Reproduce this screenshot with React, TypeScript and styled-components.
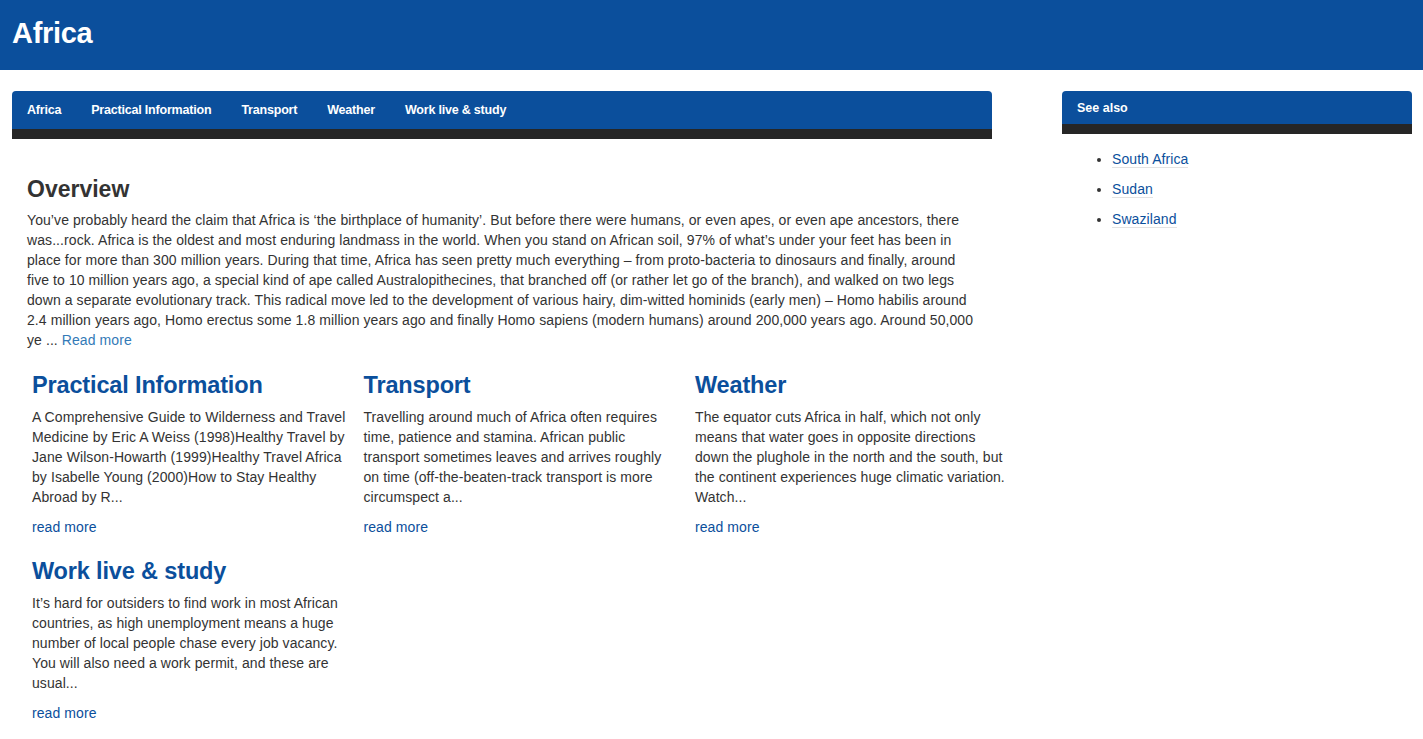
import React from "react";
import styled, { createGlobalStyle } from "styled-components";

const BLUE = "#0b4f9c";
const DARK = "#262626";

const Global = createGlobalStyle`
  html, body { margin: 0; padding: 0; background: #fff; }
  body {
    font-family: "Liberation Sans", Arial, Helvetica, sans-serif;
    font-size: 14px;
    line-height: 20px;
    color: #333;
    letter-spacing: 0.08px;
  }
  * { box-sizing: border-box; }
`;

const Header = styled.header`
  height: 70px;
  background: ${BLUE};
  display: flex;
  align-items: center;
  padding: 0 0 3px 12px;
`;

const SiteTitle = styled.h1`
  margin: 0;
  font-size: 29px;
  line-height: 1;
  font-weight: 700;
  color: #fff;
  letter-spacing: -0.3px;
`;

const Page = styled.div`
  display: flex;
  align-items: flex-start;
  padding: 21px 0 0 12px;
`;

const Main = styled.main`
  width: 980px;
  flex: none;
`;

const Nav = styled.nav`
  display: flex;
  height: 48px;
  background: ${BLUE};
  border-radius: 4px 4px 0 0;
  border-bottom: 10px solid ${DARK};
`;

const NavItem = styled.a`
  display: block;
  padding: 0 15px;
  line-height: 38px;
  font-size: 12.5px;
  font-weight: 700;
  color: #fff;
  text-decoration: none;
  letter-spacing: -0.2px;
`;

const Content = styled.div`
  padding: 0 15px;
`;

const OverviewTitle = styled.h2`
  margin: 37px 0 8px;
  font-size: 23px;
  line-height: 26px;
  font-weight: 700;
  color: #333;
  letter-spacing: 0;
`;

const Paragraph = styled.p`
  margin: 0;
  max-width: 950px;
`;

const MoreLink = styled.a<{ $light?: boolean }>`
  color: ${(p) => (p.$light ? "#337ab7" : BLUE)};
  text-decoration: none;
`;

const CardGrid = styled.div`
  display: grid;
  grid-template-columns: repeat(3, 316px);
  column-gap: 15.5px;
  row-gap: 21px;
  margin: 22px 0 0 5px;
`;

const Card = styled.section`
  display: flex;
  flex-direction: column;
  align-items: flex-start;
`;

const CardTitle = styled.h3`
  margin: 0 0 9px;
  font-size: 23.5px;
  line-height: 26px;
  font-weight: 700;
  color: ${BLUE};
  letter-spacing: -0.15px;
`;

const CardText = styled.p`
  margin: 0 0 10px;
`;

const Sidebar = styled.aside`
  width: 350px;
  margin-left: 70px;
  flex: none;
`;

const SideHead = styled.div`
  height: 43px;
  background: ${BLUE};
  border-radius: 4px 4px 0 0;
  border-bottom: 10px solid ${DARK};
  padding: 1px 0 0 15px;
  font-size: 12.5px;
  line-height: 32px;
  font-weight: 700;
  color: #fff;
  letter-spacing: 0;
`;

const SideList = styled.ul`
  margin: 15px 0 0;
  padding-left: 50px;
`;

const SideItem = styled.li`
  margin-bottom: 10px;
  line-height: 20px;
`;

const SideLink = styled.a`
  color: ${BLUE};
  text-decoration: none;
  border-bottom: 1px solid #e3e3e3;
`;

const cards = [
  {
    title: "Practical Information",
    text: "A Comprehensive Guide to Wilderness and Travel Medicine by Eric A Weiss (1998)Healthy Travel by Jane Wilson-Howarth (1999)Healthy Travel Africa by Isabelle Young (2000)How to Stay Healthy Abroad by R...",
  },
  {
    title: "Transport",
    text: "Travelling around much of Africa often requires time, patience and stamina. African public transport sometimes leaves and arrives roughly on time (off-the-beaten-track transport is more circumspect a...",
  },
  {
    title: "Weather",
    text: "The equator cuts Africa in half, which not only means that water goes in opposite directions down the plughole in the north and the south, but the continent experiences huge climatic variation. Watch...",
  },
  {
    title: "Work live & study",
    text: "It\u2019s hard for outsiders to find work in most African countries, as high unemployment means a huge number of local people chase every job vacancy. You will also need a work permit, and these are usual...",
  },
];

const navItems = ["Africa", "Practical Information", "Transport", "Weather", "Work live & study"];

export default function App() {
  return (
    <>
      <Global />
      <Header>
        <SiteTitle>Africa</SiteTitle>
      </Header>
      <Page>
        <Main>
          <Nav>
            {navItems.map((n) => (
              <NavItem key={n} href="#">
                {n}
              </NavItem>
            ))}
          </Nav>
          <Content>
            <OverviewTitle>Overview</OverviewTitle>
            <Paragraph>
              You’ve probably heard the claim that Africa is ‘the birthplace of humanity’. But before there were
              humans, or even apes, or even ape ancestors, there was...rock. Africa is the oldest and most enduring
              landmass in the world. When you stand on African soil, 97% of what’s under your feet has been in place
              for more than 300 million years. During that time, Africa has seen pretty much everything – from
              proto-bacteria to dinosaurs and finally, around five to 10 million years ago, a special kind of ape
              called Australopithecines, that branched off (or rather let go of the branch), and walked on two legs
              down a separate evolutionary track. This radical move led to the development of various hairy,
              dim-witted hominids (early men) – Homo habilis around 2.4 million years ago, Homo erectus some 1.8
              million years ago and finally Homo sapiens (modern humans) around 200,000 years ago. Around 50,000 ye
              ... <MoreLink $light href="#">Read more</MoreLink>
            </Paragraph>
            <CardGrid>
              {cards.map((c) => (
                <Card key={c.title}>
                  <CardTitle>{c.title}</CardTitle>
                  <CardText>{c.text}</CardText>
                  <MoreLink href="#">read more</MoreLink>
                </Card>
              ))}
            </CardGrid>
          </Content>
        </Main>
        <Sidebar>
          <SideHead>See also</SideHead>
          <SideList>
            {["South Africa", "Sudan", "Swaziland"].map((s) => (
              <SideItem key={s}>
                <SideLink href="#">{s}</SideLink>
              </SideItem>
            ))}
          </SideList>
        </Sidebar>
      </Page>
    </>
  );
}
